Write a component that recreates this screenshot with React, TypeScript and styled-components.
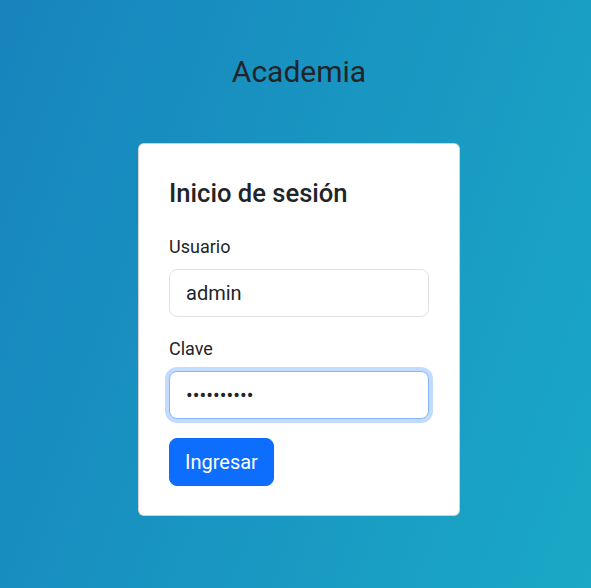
import React from "react";
import styled, { createGlobalStyle, css } from "styled-components";

const GlobalStyle = createGlobalStyle`
  *, *::before, *::after { box-sizing: border-box; }
  html, body { margin: 0; padding: 0; }
  body {
    font-family: Roboto, "Liberation Sans", Arial, sans-serif;
    color: #212529;
    min-height: 100vh;
    background: linear-gradient(110deg, #1784bd 0%, #1aa8c6 100%);
  }
`;

const Page = styled.main`
  min-height: 100vh;
  display: flex;
  flex-direction: column;
  align-items: center;
  padding: 53px 0 0 7px;
`;

const Title = styled.h1`
  margin: 0 0 52px 0;
  font-size: 30px;
  font-weight: 400;
  line-height: 38px;
  color: #212529;
`;

const Card = styled.section`
  width: 322px;
  background: #fff;
  border: 1px solid rgba(0, 0, 0, 0.175);
  border-radius: 6px;
  padding: 34px 30px 29px;
  display: flex;
  flex-direction: column;
`;

const Heading = styled.h2`
  margin: 0 0 24px 0;
  font-size: 25.6px;
  font-weight: 500;
  line-height: 31px;
  color: #212529;
`;

const Field = styled.div`
  display: flex;
  flex-direction: column;
  margin-bottom: 18px;
`;

const Label = styled.label`
  font-size: 18px;
  line-height: 27px;
  margin-bottom: 9px;
  color: #212529;
`;

const Input = styled.input<{ $focused?: boolean }>`
  width: 100%;
  height: 48px;
  padding: 8px 16px;
  font-family: inherit;
  font-size: 20px;
  line-height: 30px;
  color: #212529;
  background: #fff;
  border: 1px solid #dee2e6;
  border-radius: 8px;
  outline: none;
  ${(p) =>
    p.$focused &&
    css`
      border-color: #86b7fe;
      box-shadow: 0 0 0 4px rgba(13, 110, 253, 0.25);
    `}
`;

const Button = styled.button`
  align-self: flex-start;
  height: 48px;
  margin-top: 1px;
  padding: 8px 15px;
  font-family: inherit;
  font-size: 20px;
  line-height: 30px;
  color: #fff;
  background: #0d6efd;
  border: 1px solid #0d6efd;
  border-radius: 8px;
  cursor: pointer;
`;

export default function App() {
  return (
    <>
      <GlobalStyle />
      <Page>
        <Title>Academia</Title>
        <Card>
          <Heading>Inicio de sesión</Heading>
          <Field>
            <Label htmlFor="usuario">Usuario</Label>
            <Input id="usuario" type="text" defaultValue="admin" readOnly />
          </Field>
          <Field>
            <Label htmlFor="clave">Clave</Label>
            <Input id="clave" type="password" defaultValue="1234567890" readOnly $focused />
          </Field>
          <Button type="button">Ingresar</Button>
        </Card>
      </Page>
    </>
  );
}
